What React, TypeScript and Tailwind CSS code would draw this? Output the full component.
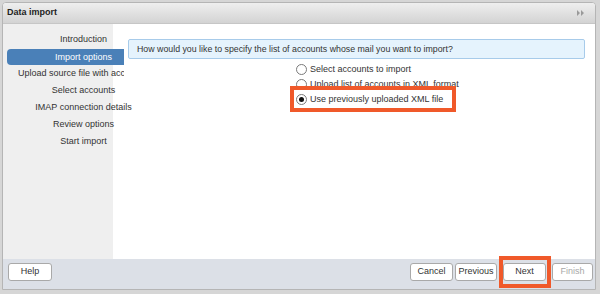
import React from "react";

const steps = [
  "Introduction",
  "Import options",
  "Upload source file with accounts",
  "Select accounts",
  "IMAP connection details",
  "Review options",
  "Start import",
];

const options = [
  "Select accounts to import",
  "Upload list of accounts in XML format",
  "Use previously uploaded XML file",
];

const Radio: React.FC<{ checked?: boolean }> = ({ checked }) => (
  <span className="w-[11px] h-[11px] rounded-full border border-[#7a7a7a] bg-white flex items-center justify-center shrink-0">
    {checked && <span className="w-[5px] h-[5px] rounded-full bg-[#111]" />}
  </span>
);

const Button: React.FC<{ label: string; disabled?: boolean; className?: string }> = ({
  label,
  disabled,
  className = "",
}) => (
  <div
    className={`h-[18px] flex items-center justify-center bg-white border border-[#a9a9a9] rounded-[3px] ${
      disabled ? "text-[#a8a8a8]" : "text-[#333]"
    } ${className}`}
  >
    {label}
  </div>
);

export default function App() {
  return (
    <div className="w-[600px] h-[294px] bg-[#d6d6d6] pt-[2px] pl-[2px] pr-[4px] pb-[4px] font-['Liberation_Sans',Arial,sans-serif] text-[9px] text-[#333]">
      <div className="relative h-full flex flex-col border border-[#b5b5b5] rounded-t-[4px] bg-white overflow-hidden">
        {/* Header */}
        <div className="h-[21px] shrink-0 flex items-center justify-between pl-[4px] pr-[10px] bg-gradient-to-b from-[#efefef] to-[#d3d3d3] border-b border-[#c6c6c6]">
          <span className="font-bold text-[#222]">Data import</span>
          <svg width="8" height="6" viewBox="0 0 8 6">
            <path d="M0 0 L3 3 L0 6 Z M4 0 L7 3 L4 6 Z" fill="#9a9a9a" />
          </svg>
        </div>

        {/* Body */}
        <div className="flex-1 flex">
          <div className="relative z-10 w-[110px] shrink-0 bg-[#efefef] pt-[7px]">
            {steps.map((s, i) =>
              i === 1 ? (
                <div key={s} className="h-[17px] flex items-center">
                  <div className="shrink-0 ml-[4px] w-[117px] h-[16px] bg-[#4a80b8] rounded-l-[4px] text-white pl-[48px] leading-[16px] whitespace-nowrap">
                    {s}
                  </div>
                </div>
              ) : i === 2 ? (
                <div key={s} className="ml-[15px] w-[106px] h-[17px] leading-[17px] overflow-hidden whitespace-nowrap">
                  {s}
                </div>
              ) : (
                <div key={s} className="w-[161px] h-[17px] leading-[17px] text-center whitespace-nowrap">
                  {s}
                </div>
              )
            )}
          </div>

          <div className="flex-1 bg-white pt-[15px] pl-[15px] pr-[10px]">
            <div className="h-[20px] border border-[#a7cbea] bg-[#e5f3fd] rounded-[2px] pl-[8px] leading-[18px] text-[8.8px] text-[#333]">
              How would you like to specify the list of accounts whose mail you want to import?
            </div>
            <div className="mt-[3px] pl-[168px] flex flex-col">
              {options.map((o, i) => (
                <div key={o} className="h-[15px] flex items-center gap-[3px] whitespace-nowrap">
                  <Radio checked={i === 2} />
                  <span>{o}</span>
                </div>
              ))}
            </div>
          </div>
        </div>

        {/* Footer */}
        <div className="h-[30px] shrink-0 bg-[#dce0e7] flex items-start pt-[4px] pl-[5px] pr-[2px]">
          <Button label="Help" className="w-[44px]" />
          <div className="ml-auto flex">
            <Button label="Cancel" className="w-[43px]" />
            <Button label="Previous" className="w-[42px] ml-[2px]" />
            <Button label="Next" className="w-[43px] ml-[6px]" />
            <Button label="Finish" disabled className="w-[41px] ml-[6px]" />
          </div>
        </div>

        {/* Highlight annotations */}
        <div className="absolute left-[287px] top-[83px] w-[166px] h-[26px] border-[4px] border-[#f0592a]" />
        <div className="absolute left-[496px] top-[253px] w-[52px] h-[32px] border-[4px] border-[#f0592a]" />
      </div>
    </div>
  );
}
